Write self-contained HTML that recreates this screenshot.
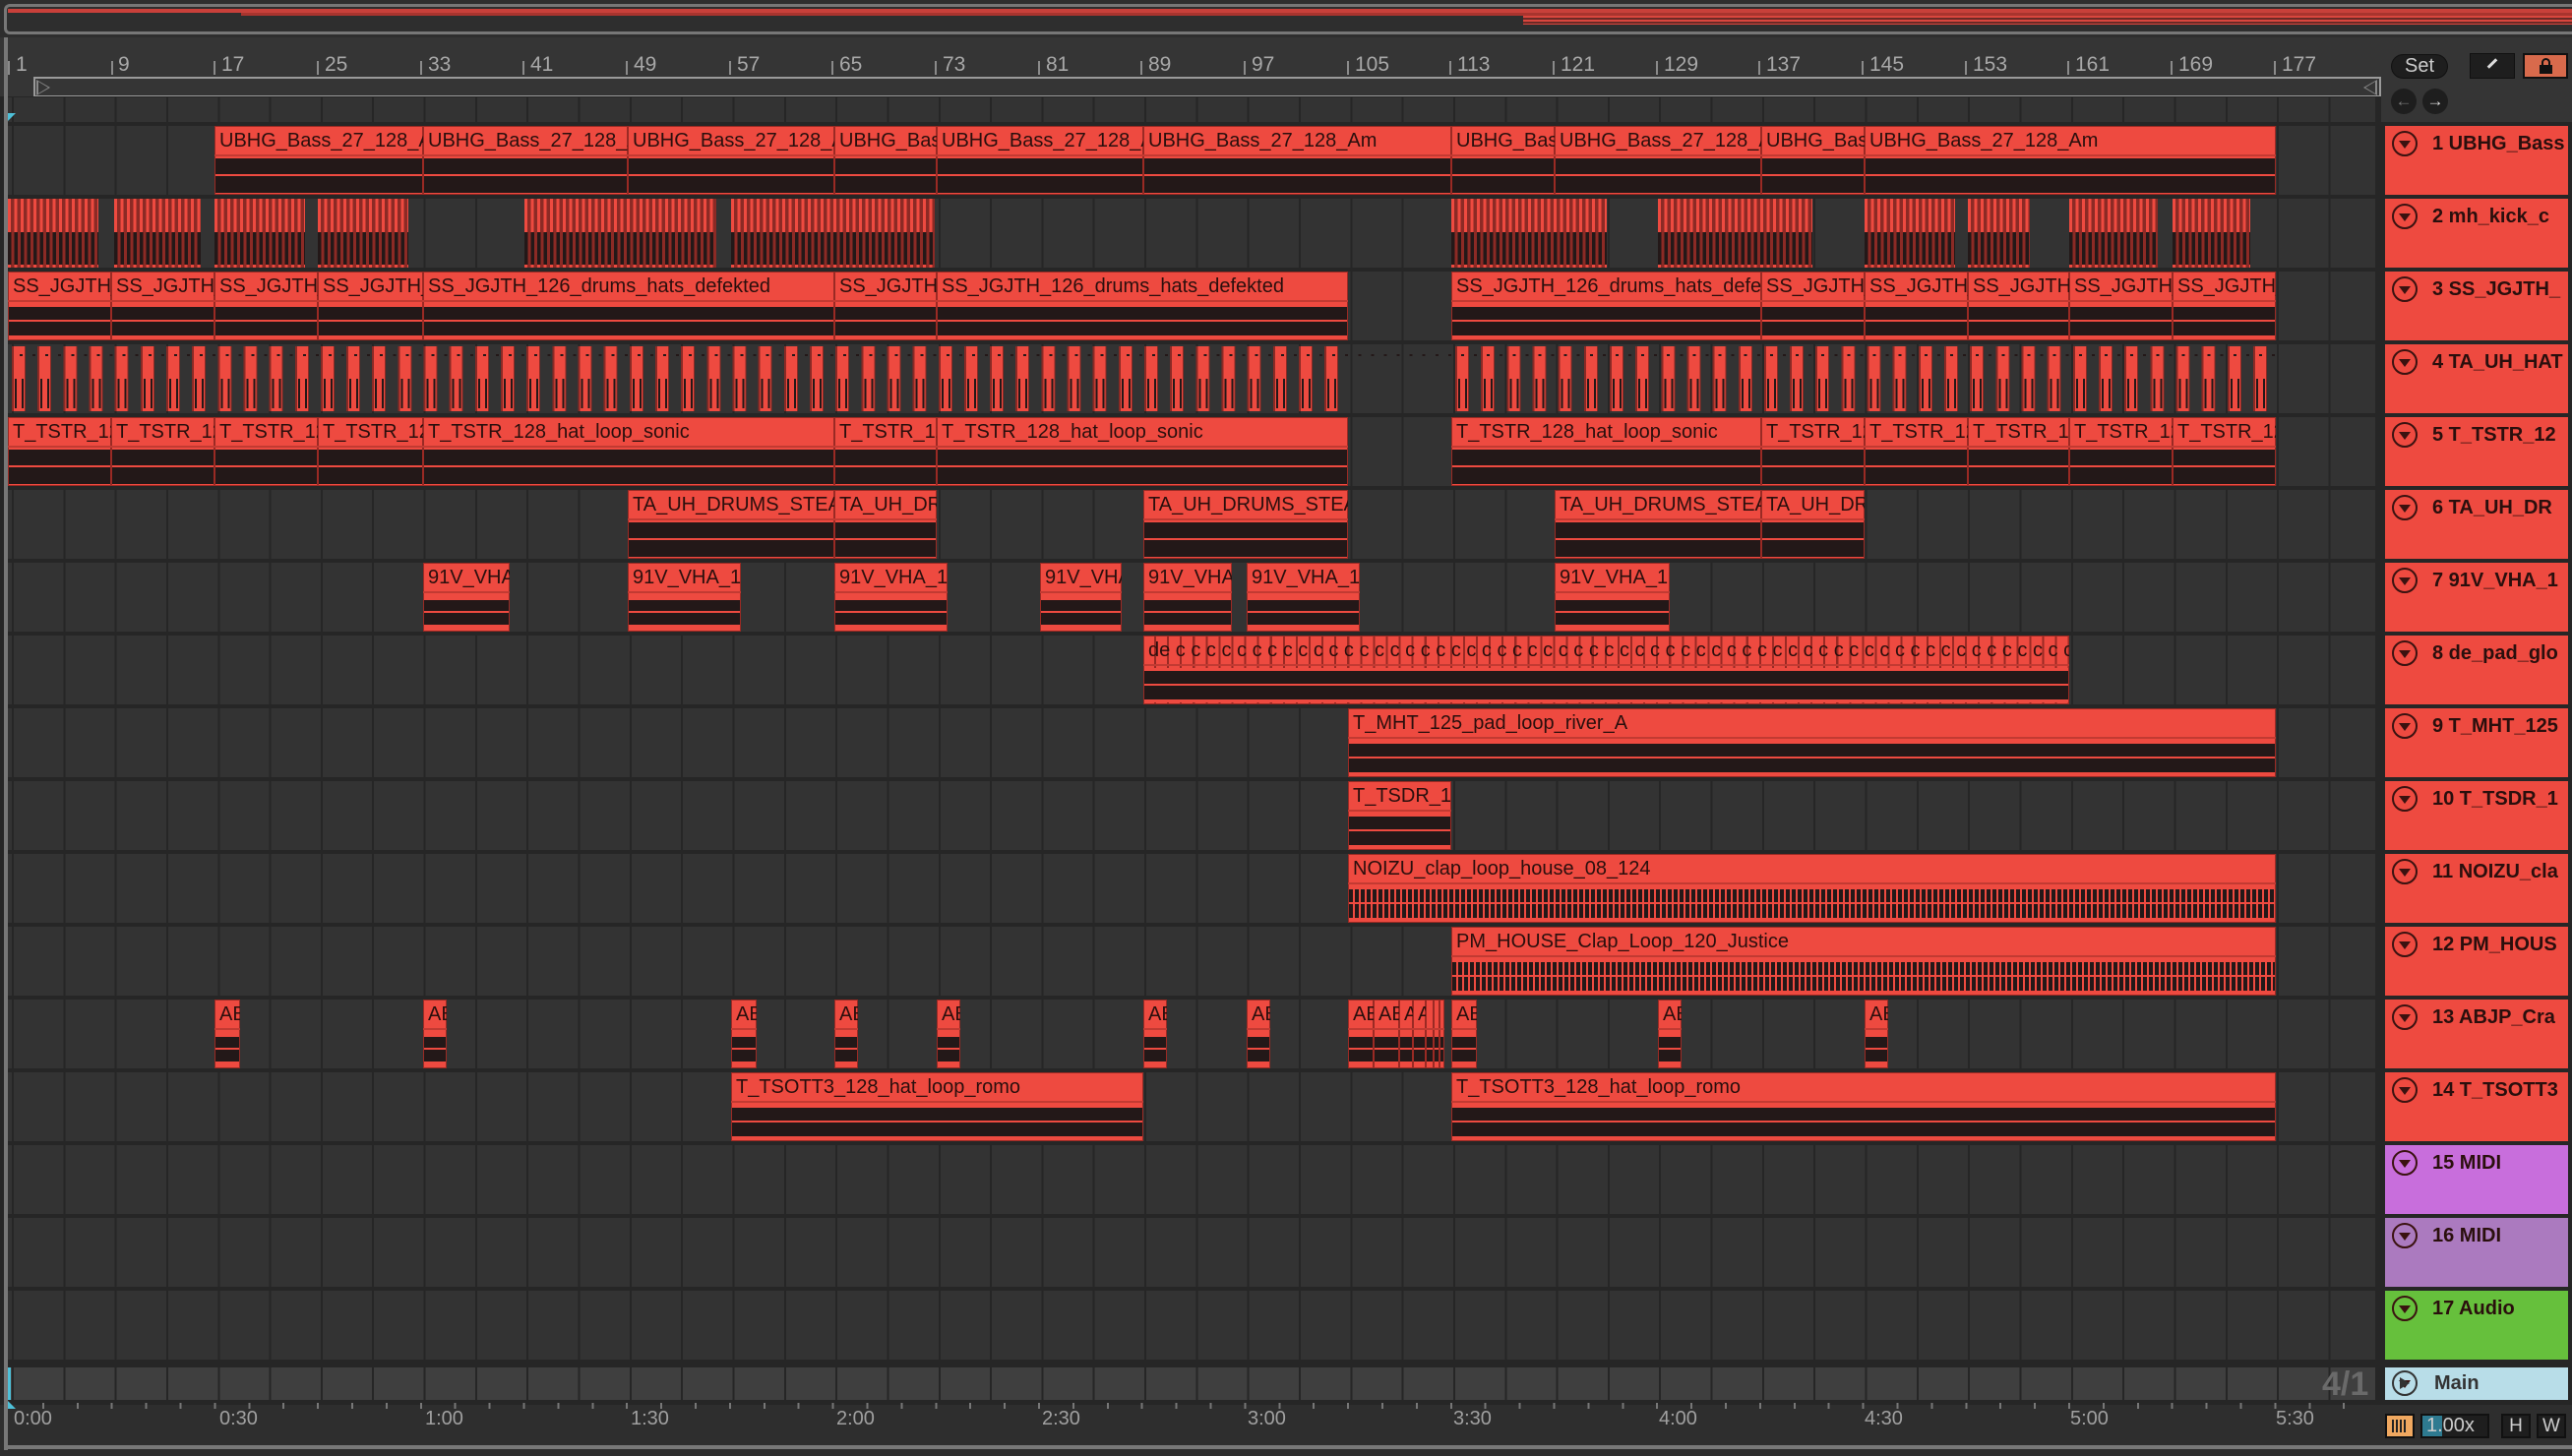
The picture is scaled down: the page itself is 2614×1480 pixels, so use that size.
<!DOCTYPE html>
<html><head><meta charset="utf-8">
<style>
*{margin:0;padding:0;box-sizing:border-box}
body{width:2614px;height:1480px;background:#2e2e2e;position:relative;overflow:hidden;font-family:"Liberation Sans",sans-serif}
.a{position:absolute}
.lane{position:absolute;left:8px;width:2406px;height:70px;background-color:#333;background-image:repeating-linear-gradient(90deg,transparent 0 4px,#262626 4px 6px,transparent 6px 52.32px)}
.c{position:absolute;height:70px;background:#ee4a40;box-shadow:inset 0 0 0 1px #9a2a24;overflow:hidden;white-space:nowrap}
.c b{display:block;height:31px;line-height:31px;padding-left:5px;font-weight:normal;font-size:20px;color:#2a0f0d;border-bottom:2px solid #c23a32;overflow:hidden}
.w{position:absolute;left:1px;right:1px;top:33px;height:35px;background:#231818}
.w:before{content:"";position:absolute;left:0;right:0;top:16px;height:2px;background:#ee4a40}
.w3{box-shadow:inset 0 3px 0 #ee4a40,inset 0 -3px 0 #ee4a40}
.w7{box-shadow:inset 0 5px 0 #ee4a40,inset 0 -5px 0 #ee4a40}
.wn{background:repeating-linear-gradient(90deg,#231818 0 4px,#ee4a40 4px 6px)}
.kk{position:absolute;top:202px;height:70px;background:repeating-linear-gradient(90deg,#ee4a40 0 3px,#8c2a25 3px 6.5px)}
.kk:after{content:"";position:absolute;left:0;right:0;top:34px;height:33px;background:repeating-linear-gradient(90deg,#231818 0 3.5px,transparent 3.5px 6.5px)}
.hd{position:absolute;left:2424px;width:186px;height:70px;background:#ee4a40}
.hd span{position:absolute;left:48px;top:7px;font-size:20px;font-weight:bold;color:#2a0f0d;white-space:nowrap;overflow:hidden;width:136px}
.hd i{position:absolute;left:7px;top:5px;width:26px;height:26px;border:2px solid #3a1210;border-radius:50%}
.hd i:after{content:"";position:absolute;left:5px;top:8px;border-left:6px solid transparent;border-right:6px solid transparent;border-top:8px solid #3a1210}
.rl{position:absolute;top:54px;font-size:21px;color:#a8a8a8}
.tk{position:absolute;top:62px;width:2px;height:14px;border-left:2px solid #8a8a8a}
.bl{position:absolute;top:1431px;font-size:20px;color:#a0a0a0}
</style></head><body>
<!-- overview -->
<div class="a" style="left:4px;top:4px;width:2610px;height:31px;border:3px solid #777;border-right:none;border-radius:6px 0 0 6px;background:#2e2e2e"></div>
<div class="a" style="left:8px;top:9px;width:2606px;height:4px;background:#c8403a"></div>
<div class="a" style="left:245px;top:13px;width:2369px;height:3px;background:#a8342e"></div>
<div class="a" style="left:1548px;top:16px;width:1066px;height:9px;background:repeating-linear-gradient(#d9463e 0 2px,#6a2a26 2px 4px)"></div>
<!-- ruler -->
<div class="a" style="left:0;top:38px;width:2420px;height:60px;background:#353535"></div>
<div class="a" style="left:34px;top:78px;width:2386px;height:21px;border-top:2px solid #9a9a9a;border-bottom:2px solid #9a9a9a"></div>
<div class="a" style="left:34px;top:78px;width:0;height:21px;border-left:2px solid #9a9a9a"></div>
<div class="a" style="left:2418px;top:78px;width:0;height:21px;border-left:2px solid #9a9a9a"></div>
<div class="a" style="left:37px;top:81px;border-left:14px solid #888;border-top:8px solid transparent;border-bottom:8px solid transparent"></div>
<div class="a" style="left:39px;top:83px;border-left:10px solid #353535;border-top:6px solid transparent;border-bottom:6px solid transparent"></div>
<div class="a" style="left:2402px;top:81px;border-right:14px solid #888;border-top:8px solid transparent;border-bottom:8px solid transparent"></div>
<div class="a" style="left:2404px;top:83px;border-right:10px solid #353535;border-top:6px solid transparent;border-bottom:6px solid transparent"></div>

<div class="tk" style="left:8px"></div><div class="rl" style="left:16px">1</div>
<div class="tk" style="left:113px"></div><div class="rl" style="left:120px">9</div>
<div class="tk" style="left:217px"></div><div class="rl" style="left:225px">17</div>
<div class="tk" style="left:322px"></div><div class="rl" style="left:330px">25</div>
<div class="tk" style="left:427px"></div><div class="rl" style="left:435px">33</div>
<div class="tk" style="left:531px"></div><div class="rl" style="left:539px">41</div>
<div class="tk" style="left:636px"></div><div class="rl" style="left:644px">49</div>
<div class="tk" style="left:741px"></div><div class="rl" style="left:749px">57</div>
<div class="tk" style="left:845px"></div><div class="rl" style="left:853px">65</div>
<div class="tk" style="left:950px"></div><div class="rl" style="left:958px">73</div>
<div class="tk" style="left:1055px"></div><div class="rl" style="left:1063px">81</div>
<div class="tk" style="left:1159px"></div><div class="rl" style="left:1167px">89</div>
<div class="tk" style="left:1264px"></div><div class="rl" style="left:1272px">97</div>
<div class="tk" style="left:1369px"></div><div class="rl" style="left:1377px">105</div>
<div class="tk" style="left:1473px"></div><div class="rl" style="left:1481px">113</div>
<div class="tk" style="left:1578px"></div><div class="rl" style="left:1586px">121</div>
<div class="tk" style="left:1683px"></div><div class="rl" style="left:1691px">129</div>
<div class="tk" style="left:1787px"></div><div class="rl" style="left:1795px">137</div>
<div class="tk" style="left:1892px"></div><div class="rl" style="left:1900px">145</div>
<div class="tk" style="left:1997px"></div><div class="rl" style="left:2005px">153</div>
<div class="tk" style="left:2101px"></div><div class="rl" style="left:2109px">161</div>
<div class="tk" style="left:2206px"></div><div class="rl" style="left:2214px">169</div>
<div class="tk" style="left:2311px"></div><div class="rl" style="left:2319px">177</div>

<!-- arrangement background -->
<div class="a" style="left:0;top:98px;width:2424px;height:1330px;background:#262626"></div>
<div class="a" style="left:2414px;top:124px;width:200px;height:1304px;background:#262626"></div>
<!-- right top controls -->
<div class="a" style="left:2420px;top:38px;width:194px;height:86px;background:#353535"></div>
<div class="a" style="left:2430px;top:55px;width:58px;height:25px;border-radius:13px;background:#1e1e1e;border:1px solid #111;color:#ccc;font-size:20px;text-align:center;line-height:23px">Set</div>
<div class="a" style="left:2430px;top:90px;width:26px;height:26px;border-radius:50%;background:#1e1e1e;color:#777;font-size:17px;text-align:center;line-height:26px">&#8592;</div>
<div class="a" style="left:2462px;top:90px;width:26px;height:26px;border-radius:50%;background:#1e1e1e;color:#ddd;font-size:17px;text-align:center;line-height:26px">&#8594;</div>
<div class="a" style="left:2510px;top:54px;width:46px;height:26px;background:#1e1e1e;border:1px solid #111"></div>
<div class="a" style="left:2527px;top:63px;width:12px;height:3px;background:#ddd;transform:rotate(-45deg)"></div>
<div class="a" style="left:2564px;top:54px;width:46px;height:26px;background:#d86a4c;border:2px solid #111"></div>
<div class="a" style="left:2581px;top:66px;width:13px;height:9px;background:#111"></div>
<div class="a" style="left:2583px;top:59px;width:9px;height:9px;border:2px solid #111;border-bottom:none;border-radius:5px 5px 0 0"></div>

<div class="a" style="left:4px;top:38px;width:4px;height:1436px;background:#777"></div>
<div class="lane" style="top:99px;height:25px"></div>
<div class="a" style="left:8px;top:115px;border-left:8px solid #4ec0d8;border-bottom:8px solid transparent"></div>
<div class="lane" style="top:128px"></div><div class="lane" style="top:202px"></div><div class="lane" style="top:276px"></div>
<div class="lane" style="top:350px"></div><div class="lane" style="top:424px"></div><div class="lane" style="top:498px"></div>
<div class="lane" style="top:572px"></div><div class="lane" style="top:646px"></div><div class="lane" style="top:720px"></div>
<div class="lane" style="top:794px"></div><div class="lane" style="top:868px"></div><div class="lane" style="top:942px"></div>
<div class="lane" style="top:1016px"></div><div class="lane" style="top:1090px"></div><div class="lane" style="top:1164px"></div>
<div class="lane" style="top:1238px"></div><div class="lane" style="top:1312px"></div>
<div class="lane" style="top:1390px;height:33px;background-color:#3f3f3f"></div>
<div class="a" style="left:2360px;top:1388px;font-size:34px;font-weight:bold;color:#6a6a6a">4/1</div>
<div class="a" style="left:8px;top:1390px;width:3px;height:33px;background:#4ec0d8"></div>

<!-- Row 1 -->
<div class="c" style="top:128px;left:218px;width:212px"><b>UBHG_Bass_27_128_Am</b><div class="w"></div></div>
<div class="c" style="top:128px;left:430px;width:208px"><b>UBHG_Bass_27_128_Am</b><div class="w"></div></div>
<div class="c" style="top:128px;left:638px;width:210px"><b>UBHG_Bass_27_128_Am</b><div class="w"></div></div>
<div class="c" style="top:128px;left:848px;width:104px"><b>UBHG_Bass</b><div class="w"></div></div>
<div class="c" style="top:128px;left:952px;width:210px"><b>UBHG_Bass_27_128_Am</b><div class="w"></div></div>
<div class="c" style="top:128px;left:1162px;width:313px"><b>UBHG_Bass_27_128_Am</b><div class="w"></div></div>
<div class="c" style="top:128px;left:1475px;width:105px"><b>UBHG_Bass</b><div class="w"></div></div>
<div class="c" style="top:128px;left:1580px;width:210px"><b>UBHG_Bass_27_128_Am</b><div class="w"></div></div>
<div class="c" style="top:128px;left:1790px;width:105px"><b>UBHG_Bass</b><div class="w"></div></div>
<div class="c" style="top:128px;left:1895px;width:418px"><b>UBHG_Bass_27_128_Am</b><div class="w"></div></div>

<!-- Row 2 kick -->
<div class="kk" style="left:8px;width:92px"></div>
<div class="kk" style="left:116px;width:88px"></div>
<div class="kk" style="left:218px;width:92px"></div>
<div class="kk" style="left:323px;width:92px"></div>
<div class="kk" style="left:533px;width:195px"></div>
<div class="kk" style="left:743px;width:207px"></div>
<div class="kk" style="left:1475px;width:158px"></div>
<div class="kk" style="left:1685px;width:157px"></div>
<div class="kk" style="left:1895px;width:92px"></div>
<div class="kk" style="left:2000px;width:63px"></div>
<div class="kk" style="left:2103px;width:90px"></div>
<div class="kk" style="left:2208px;width:79px"></div>

<!-- Row 3 -->
<div class="c" style="top:276px;left:8px;width:105px"><b>SS_JGJTH_126</b><div class="w w3"></div></div>
<div class="c" style="top:276px;left:113px;width:105px"><b>SS_JGJTH_126</b><div class="w w3"></div></div>
<div class="c" style="top:276px;left:218px;width:105px"><b>SS_JGJTH_126</b><div class="w w3"></div></div>
<div class="c" style="top:276px;left:323px;width:107px"><b>SS_JGJTH_126</b><div class="w w3"></div></div>
<div class="c" style="top:276px;left:430px;width:418px"><b>SS_JGJTH_126_drums_hats_defekted</b><div class="w w3"></div></div>
<div class="c" style="top:276px;left:848px;width:104px"><b>SS_JGJTH_126</b><div class="w w3"></div></div>
<div class="c" style="top:276px;left:952px;width:418px"><b>SS_JGJTH_126_drums_hats_defekted</b><div class="w w3"></div></div>
<div class="c" style="top:276px;left:1475px;width:315px"><b>SS_JGJTH_126_drums_hats_defekted</b><div class="w w3"></div></div>
<div class="c" style="top:276px;left:1790px;width:105px"><b>SS_JGJTH_126</b><div class="w w3"></div></div>
<div class="c" style="top:276px;left:1895px;width:105px"><b>SS_JGJTH_126</b><div class="w w3"></div></div>
<div class="c" style="top:276px;left:2000px;width:103px"><b>SS_JGJTH_126</b><div class="w w3"></div></div>
<div class="c" style="top:276px;left:2103px;width:105px"><b>SS_JGJTH_126</b><div class="w w3"></div></div>
<div class="c" style="top:276px;left:2208px;width:105px"><b>SS_JGJTH_126</b><div class="w w3"></div></div>

<!-- Row 4 -->
<div class="a" style="top:352px;left:12px;width:1358px;height:66px;background:repeating-linear-gradient(90deg,#8a2a25 0 2px,#ee4a40 2px 13px,#8a2a25 13px 14px,transparent 14px 26.16px)"></div>
<div class="a" style="top:352px;left:1479px;width:834px;height:66px;background:repeating-linear-gradient(90deg,#8a2a25 0 2px,#ee4a40 2px 13px,#8a2a25 13px 14px,transparent 14px 26.16px)"></div>
<div class="a" style="top:360px;left:12px;width:2301px;height:2px;background:repeating-linear-gradient(90deg,transparent 0 8px,#231818 8px 11px,transparent 11px 13.08px)"></div>
<div class="a" style="top:385px;left:12px;width:1358px;height:30px;background:repeating-linear-gradient(90deg,transparent 0 3px,#231818 3px 5px,transparent 5px 10px,#231818 10px 12px,transparent 12px 26.16px)"></div>
<div class="a" style="top:385px;left:1479px;width:834px;height:30px;background:repeating-linear-gradient(90deg,transparent 0 3px,#231818 3px 5px,transparent 5px 10px,#231818 10px 12px,transparent 12px 26.16px)"></div>

<!-- Row 5 -->
<div class="c" style="top:424px;left:8px;width:105px"><b>T_TSTR_128</b><div class="w"></div></div>
<div class="c" style="top:424px;left:113px;width:105px"><b>T_TSTR_128</b><div class="w"></div></div>
<div class="c" style="top:424px;left:218px;width:105px"><b>T_TSTR_128</b><div class="w"></div></div>
<div class="c" style="top:424px;left:323px;width:107px"><b>T_TSTR_128</b><div class="w"></div></div>
<div class="c" style="top:424px;left:430px;width:418px"><b>T_TSTR_128_hat_loop_sonic</b><div class="w"></div></div>
<div class="c" style="top:424px;left:848px;width:104px"><b>T_TSTR_128</b><div class="w"></div></div>
<div class="c" style="top:424px;left:952px;width:418px"><b>T_TSTR_128_hat_loop_sonic</b><div class="w"></div></div>
<div class="c" style="top:424px;left:1475px;width:315px"><b>T_TSTR_128_hat_loop_sonic</b><div class="w"></div></div>
<div class="c" style="top:424px;left:1790px;width:105px"><b>T_TSTR_128</b><div class="w"></div></div>
<div class="c" style="top:424px;left:1895px;width:105px"><b>T_TSTR_128</b><div class="w"></div></div>
<div class="c" style="top:424px;left:2000px;width:103px"><b>T_TSTR_128</b><div class="w"></div></div>
<div class="c" style="top:424px;left:2103px;width:105px"><b>T_TSTR_128</b><div class="w"></div></div>
<div class="c" style="top:424px;left:2208px;width:105px"><b>T_TSTR_128</b><div class="w"></div></div>

<!-- Row 6 -->
<div class="c" style="top:498px;left:638px;width:210px"><b>TA_UH_DRUMS_STEAM</b><div class="w"></div></div>
<div class="c" style="top:498px;left:848px;width:104px"><b>TA_UH_DRUMS</b><div class="w"></div></div>
<div class="c" style="top:498px;left:1162px;width:208px"><b>TA_UH_DRUMS_STEAM</b><div class="w"></div></div>
<div class="c" style="top:498px;left:1580px;width:210px"><b>TA_UH_DRUMS_STEAM</b><div class="w"></div></div>
<div class="c" style="top:498px;left:1790px;width:105px"><b>TA_UH_DRUMS</b><div class="w"></div></div>

<!-- Row 7 -->
<div class="c" style="top:572px;left:430px;width:88px"><b>91V_VHA_1</b><div class="w w7"></div></div>
<div class="c" style="top:572px;left:638px;width:115px"><b>91V_VHA_1</b><div class="w w7"></div></div>
<div class="c" style="top:572px;left:848px;width:115px"><b>91V_VHA_1</b><div class="w w7"></div></div>
<div class="c" style="top:572px;left:1057px;width:83px"><b>91V_VHA_1</b><div class="w w7"></div></div>
<div class="c" style="top:572px;left:1162px;width:90px"><b>91V_VHA_1</b><div class="w w7"></div></div>
<div class="c" style="top:572px;left:1267px;width:115px"><b>91V_VHA_1</b><div class="w w7"></div></div>
<div class="c" style="top:572px;left:1580px;width:117px"><b>91V_VHA_1</b><div class="w w7"></div></div>

<!-- Row 8 -->
<div class="c" style="top:646px;left:1162px;width:941px;background:repeating-linear-gradient(90deg,#ee4a40 0 11px,#9a2a24 11px 13.08px)"><b style="letter-spacing:0">de c c c c c c c c c c c c c c c c c c c c c c c c c c c c c c c c c c c c c c c c c c c c c c c c c c c c c c c c c c c c c c c c c c c c c c c c</b><div class="w w3"></div></div>

<!-- Row 9-14 -->
<div class="c" style="top:720px;left:1370px;width:943px"><b>T_MHT_125_pad_loop_river_A</b><div class="w w3"></div></div>
<div class="c" style="top:794px;left:1370px;width:105px"><b>T_TSDR_1</b><div class="w w3"></div></div>
<div class="c" style="top:868px;left:1370px;width:943px"><b>NOIZU_clap_loop_house_08_124</b><div class="w w3 wn"></div></div>
<div class="c" style="top:942px;left:1475px;width:838px"><b>PM_HOUSE_Clap_Loop_120_Justice</b><div class="w w3 wn"></div></div>

<div class="c" style="top:1016px;left:218px;width:26px"><b>AB</b><div class="w w7"></div></div>
<div class="c" style="top:1016px;left:430px;width:24px"><b>AB</b><div class="w w7"></div></div>
<div class="c" style="top:1016px;left:743px;width:26px"><b>AB</b><div class="w w7"></div></div>
<div class="c" style="top:1016px;left:848px;width:24px"><b>AB</b><div class="w w7"></div></div>
<div class="c" style="top:1016px;left:952px;width:24px"><b>AB</b><div class="w w7"></div></div>
<div class="c" style="top:1016px;left:1162px;width:24px"><b>AB</b><div class="w w7"></div></div>
<div class="c" style="top:1016px;left:1267px;width:24px"><b>AB</b><div class="w w7"></div></div>
<div class="c" style="top:1016px;left:1370px;width:26px"><b>AB</b><div class="w w7"></div></div>
<div class="c" style="top:1016px;left:1396px;width:26px"><b>AB</b><div class="w w7"></div></div>
<div class="c" style="top:1016px;left:1422px;width:14px"><b>A</b><div class="w w7"></div></div>
<div class="c" style="top:1016px;left:1436px;width:13px"><b>A</b><div class="w w7"></div></div>
<div class="c" style="top:1016px;left:1449px;width:8px"><b></b><div class="w w7"></div></div>
<div class="c" style="top:1016px;left:1457px;width:6px"><b></b><div class="w w7"></div></div>
<div class="c" style="top:1016px;left:1463px;width:5px"><b></b><div class="w w7"></div></div>
<div class="c" style="top:1016px;left:1475px;width:26px"><b>AB</b><div class="w w7"></div></div>
<div class="c" style="top:1016px;left:1685px;width:24px"><b>AB</b><div class="w w7"></div></div>
<div class="c" style="top:1016px;left:1895px;width:24px"><b>AB</b><div class="w w7"></div></div>

<div class="c" style="top:1090px;left:743px;width:419px"><b>T_TSOTT3_128_hat_loop_romo</b><div class="w w3"></div></div>
<div class="c" style="top:1090px;left:1475px;width:838px"><b>T_TSOTT3_128_hat_loop_romo</b><div class="w w3"></div></div>

<!-- headers -->
<div class="hd" style="top:128px"><i></i><span>1 UBHG_Bass</span></div>
<div class="hd" style="top:202px"><i></i><span>2 mh_kick_c</span></div>
<div class="hd" style="top:276px"><i></i><span>3 SS_JGJTH_</span></div>
<div class="hd" style="top:350px"><i></i><span>4 TA_UH_HAT</span></div>
<div class="hd" style="top:424px"><i></i><span>5 T_TSTR_12</span></div>
<div class="hd" style="top:498px"><i></i><span>6 TA_UH_DR</span></div>
<div class="hd" style="top:572px"><i></i><span>7 91V_VHA_1</span></div>
<div class="hd" style="top:646px"><i></i><span>8 de_pad_glo</span></div>
<div class="hd" style="top:720px"><i></i><span>9 T_MHT_125</span></div>
<div class="hd" style="top:794px"><i></i><span>10 T_TSDR_1</span></div>
<div class="hd" style="top:868px"><i></i><span>11 NOIZU_cla</span></div>
<div class="hd" style="top:942px"><i></i><span>12 PM_HOUS</span></div>
<div class="hd" style="top:1016px"><i></i><span>13 ABJP_Cra</span></div>
<div class="hd" style="top:1090px"><i></i><span>14 T_TSOTT3</span></div>
<div class="hd" style="top:1164px;background:#c86edc"><i></i><span>15 MIDI</span></div>
<div class="hd" style="top:1238px;background:#ab7abf"><i></i><span>16 MIDI</span></div>
<div class="hd" style="top:1312px;background:#66c03c"><i></i><span>17 Audio</span></div>
<div class="hd" style="top:1390px;height:33px;background:#b8dde8"><i style="top:3px;border-color:#333"></i><span style="top:5px;left:50px;color:#333">Main</span></div>
<div class="a" style="left:2439px;top:1400px;border-left:10px solid #333;border-top:6px solid transparent;border-bottom:6px solid transparent"></div>

<!-- bottom time ruler -->
<div class="a" style="left:8px;top:1426px;width:2406px;height:6px;background:repeating-linear-gradient(90deg,#777 0 2px,transparent 2px 34.9px)"></div>
<div class="bl" style="left:14px">0:00</div>
<div class="bl" style="left:223px">0:30</div>
<div class="bl" style="left:432px">1:00</div>
<div class="bl" style="left:641px">1:30</div>
<div class="bl" style="left:850px">2:00</div>
<div class="bl" style="left:1059px">2:30</div>
<div class="bl" style="left:1268px">3:00</div>
<div class="bl" style="left:1477px">3:30</div>
<div class="bl" style="left:1686px">4:00</div>
<div class="bl" style="left:1895px">4:30</div>
<div class="bl" style="left:2104px">5:00</div>
<div class="bl" style="left:2313px">5:30</div>
<div class="a" style="left:8px;top:1424px;border-left:8px solid #4ec0d8;border-top:8px solid transparent"></div>
<div class="a" style="left:4px;top:1469px;width:2610px;height:4px;background:#777"></div>

<div class="a" style="left:2424px;top:1437px;width:30px;height:25px;background:#f0a860;border:2px solid #111"></div>
<div class="a" style="left:2431px;top:1443px;width:16px;height:13px;background:repeating-linear-gradient(90deg,#222 0 2px,transparent 2px 4px)"></div>
<div class="a" style="left:2460px;top:1437px;width:70px;height:25px;background:#1e1e1e;border:2px solid #111"></div>
<div class="a" style="left:2462px;top:1439px;width:20px;height:21px;background:#2e7a90"></div>
<div class="a" style="left:2466px;top:1438px;font-size:20px;color:#ccc">1.00x</div>
<div class="a" style="left:2542px;top:1437px;width:30px;height:25px;background:#1e1e1e;border:2px solid #111;color:#ccc;font-size:19px;text-align:center;line-height:22px">H</div>
<div class="a" style="left:2578px;top:1437px;width:30px;height:25px;background:#1e1e1e;border:2px solid #111;color:#ccc;font-size:19px;text-align:center;line-height:22px">W</div>
</body></html>
